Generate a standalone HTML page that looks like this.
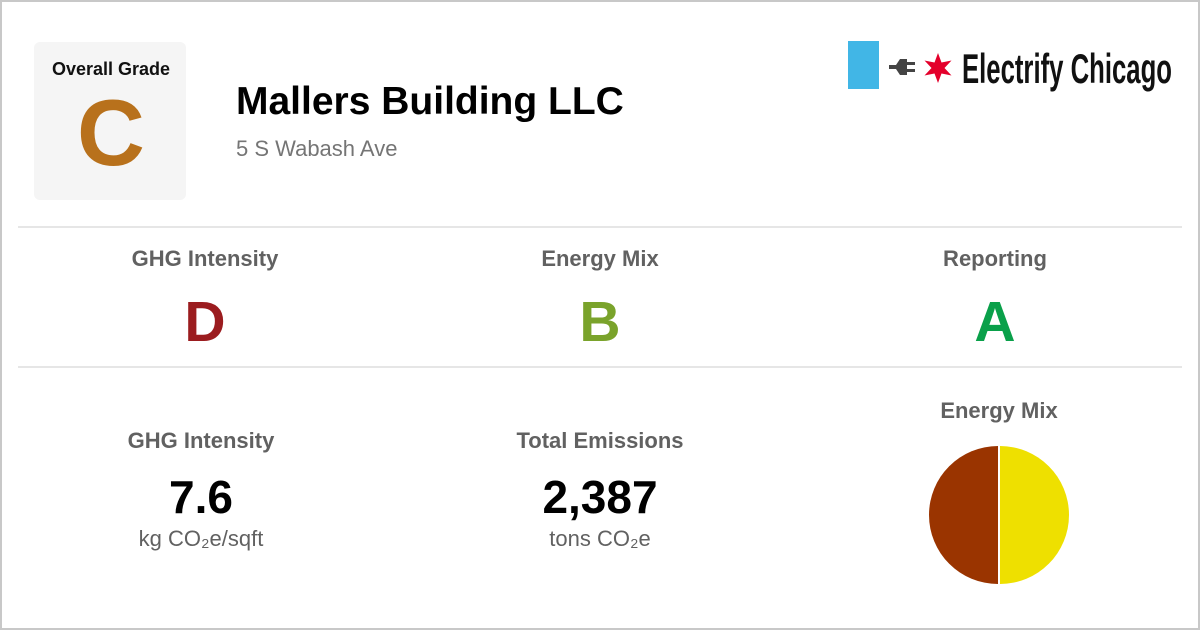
<!DOCTYPE html>
<html><head><meta charset="utf-8"><style>
*{margin:0;padding:0;box-sizing:border-box}
body{width:1200px;height:630px;background:#fff;font-family:"Liberation Sans",sans-serif;position:relative;overflow:hidden}
.frame{position:absolute;left:0;top:0;width:1200px;height:630px;border:2px solid #c8c8c8}
.abs{position:absolute}
.c{position:absolute;text-align:center;transform:translateX(-50%);white-space:nowrap}
.lbl{font-size:22px;font-weight:bold;color:#616161}
.grade{font-size:57px;font-weight:bold}
.hr{position:absolute;left:18px;width:1164px;height:2px;background:#e6e6e6}
</style></head><body>
<div class="frame"></div>
<div class="abs" style="left:34px;top:42px;width:152px;height:158px;background:#f5f5f5;border-radius:6px"></div>
<div class="c" style="left:111px;top:59px;font-size:18px;font-weight:bold;color:#111">Overall Grade</div>
<div class="c" style="left:111px;top:86px;font-size:94px;font-weight:bold;color:#b8711c;line-height:1">C</div>
<div class="abs" style="left:236px;top:80px;font-size:39px;font-weight:bold;color:#000;white-space:nowrap">Mallers Building LLC</div>
<div class="abs" style="left:236px;top:136px;font-size:22px;color:#757575">5 S Wabash Ave</div>
<div class="abs" style="left:848px;top:41px;width:31px;height:48px;background:#41b6e6"></div>
<svg class="abs" style="left:889px;top:57px" width="30" height="20" viewBox="0 0 30 20"><path d="M0 8h7l4-6h7v16h-7l-4-6H0z" fill="#444"/><rect x="18" y="5" width="8" height="3" fill="#444"/><rect x="18" y="12" width="8" height="3" fill="#444"/></svg>
<svg class="abs" style="left:922px;top:52px" width="32" height="32" viewBox="-16 -16 32 32"><path d="M0-15L3.5-5.5 13.5-7.5 6.5 0 13.5 7.5 3.5 5.5 0 15-3.5 5.5-13.5 7.5-6.5 0-13.5-7.5-3.5-5.5z" fill="#e4002b"/></svg>
<div class="abs" style="left:962px;top:45px;font-size:42px;font-weight:bold;color:#111;transform:scaleX(0.612);transform-origin:left top;white-space:nowrap">Electrify Chicago</div>
<div class="hr" style="top:226px"></div>
<div class="c lbl" style="left:205px;top:246px">GHG Intensity</div>
<div class="c lbl" style="left:600px;top:246px">Energy Mix</div>
<div class="c lbl" style="left:995px;top:246px">Reporting</div>
<div class="c grade" style="left:205px;top:289px;color:#9b1c1f">D</div>
<div class="c grade" style="left:600px;top:289px;color:#7aa32b">B</div>
<div class="c grade" style="left:995px;top:289px;color:#0aa04a">A</div>
<div class="hr" style="top:366px"></div>
<div class="c lbl" style="left:201px;top:428px">GHG Intensity</div>
<div class="c lbl" style="left:600px;top:428px">Total Emissions</div>
<div class="c lbl" style="left:999px;top:398px">Energy Mix</div>
<div class="c" style="left:201px;top:470px;font-size:46px;font-weight:bold;color:#000">7.6</div>
<div class="c" style="left:600px;top:470px;font-size:46px;font-weight:bold;color:#000">2,387</div>
<div class="c" style="left:201px;top:526px;font-size:22px;color:#616161">kg CO₂e/sqft</div>
<div class="c" style="left:600px;top:526px;font-size:22px;color:#616161">tons CO₂e</div>
<svg class="abs" style="left:929px;top:445px" width="140" height="140" viewBox="0 0 140 140"><path d="M69 1A69 69 0 0 0 69 139z" fill="#9a3400"/><path d="M71 1A69 69 0 0 1 71 139z" fill="#eee000"/></svg>
</body></html>
